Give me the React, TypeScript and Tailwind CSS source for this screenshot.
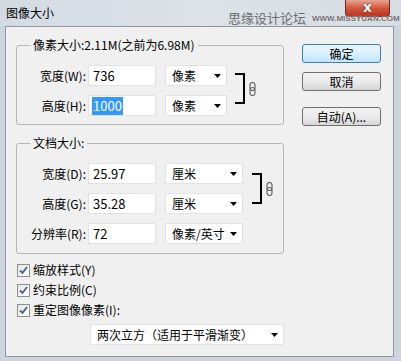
import React from 'react';

const Arrow: React.FC = () => (
  <svg width="7" height="4" viewBox="0 0 7 4" className="shrink-0">
    <path d="M0 0 H7 L3.5 4 Z" fill="#000" />
  </svg>
);

const Select: React.FC<{ value: string; width: string }> = ({ value, width }) => (
  <div className={`${width} h-[21px] bg-white border border-[#e2e2e2] flex items-center justify-between pl-[6px] pr-[5px]`}>
    <span className="leading-none whitespace-nowrap">{value}</span>
    <Arrow />
  </div>
);

const Field: React.FC<{ label: string; value: string; selected?: boolean }> = ({ label, value, selected }) => (
  <div className="flex items-center h-[21px]">
    <div className="w-[71px] pr-[2px] text-right whitespace-nowrap">{label}</div>
    <div className="w-[68px] h-[21px] bg-white border border-[#e2e2e2] flex items-center pl-[3px] text-[13px]">
      {selected ? (
        <span className="bg-[#3399ff] text-white px-[1px] leading-[18px]">{value}</span>
      ) : (
        <span className="pl-[1px]">{value}</span>
      )}
    </div>
  </div>
);

const Bracket: React.FC = () => (
  <div className="w-[10px] h-[31px] border-2 border-l-0 border-black" />
);

const LinkIcon: React.FC = () => (
  <svg width="7" height="14" viewBox="0 0 7 14" className="shrink-0">
    <rect x="1" y="0.5" width="5" height="8" rx="2.5" fill="none" stroke="#666" strokeWidth="1.2" />
    <rect x="1" y="5.5" width="5" height="8" rx="2.5" fill="none" stroke="#666" strokeWidth="1.2" />
  </svg>
);

const Checkbox: React.FC<{ label: string }> = ({ label }) => (
  <div className="flex items-center h-[20px] ml-[1px]">
    <div className="w-[13px] h-[13px] border border-[#8e8f8f] bg-gradient-to-br from-[#e6e6e6] to-white flex items-center justify-center">
      <svg width="9" height="9" viewBox="0 0 9 9">
        <path d="M1 4.5 L3.5 7 L8 1" fill="none" stroke="#4a5f97" strokeWidth="1.8" />
      </svg>
    </div>
    <span className="ml-[3px]">{label}</span>
  </div>
);

const Button: React.FC<{ label: string; primary?: boolean; className?: string }> = ({ label, primary, className }) => (
  <div
    className={`w-[79px] h-[19px] rounded-[3px] border flex items-center justify-center leading-none ${
      primary
        ? 'border-[#3c7fb1] bg-gradient-to-b from-[#eaf6fd] via-[#d9f0fc] to-[#bee6fd]'
        : 'border-[#707070] bg-gradient-to-b from-[#f2f2f2] via-[#ebebeb] to-[#d6d6d6]'
    } ${className || ''}`}
  >
    {label}
  </div>
);

const App: React.FC = () => {
  return (
    <div className="w-[401px] h-[361px] bg-[#cdd4dc] flex flex-col font-['Noto_Sans_CJK_SC',sans-serif] text-[12px] text-black overflow-hidden">
      {/* title bar */}
      <div className="relative h-[26px] shrink-0 bg-gradient-to-r from-[#d3dae2] via-[#dde2e8] to-[#d6dce3] flex items-center pl-[6px]">
        <span className="leading-none">图像大小</span>
        <div className="absolute top-0 right-[11px] w-[45px] h-[17px] rounded-b-[4px] border border-[#6b2a25] border-t-0 bg-gradient-to-b from-[#e8a493] via-[#d2573f] to-[#b8341e] flex items-start justify-center pt-[1px]">
          <span className="text-white font-bold text-[14px] leading-[12px] font-['DejaVu_Sans',sans-serif] [text-shadow:0_0_2px_#3a1010]">x</span>
        </div>
        <div className="absolute left-[228px] top-[11px] flex items-center whitespace-nowrap">
          <span className="text-[#6e6e6e] text-[13px] leading-none">思缘设计论坛</span>
          <span className="ml-[6px] text-[#6e6e6e] text-[8px] font-bold leading-none font-['Liberation_Sans',sans-serif] mt-[2px] [text-shadow:0_0_1px_#ffffff]">WWW.MISSYUAN.COM</span>
        </div>
      </div>

      {/* content */}
      <div className="ml-[5px] mr-[7px] h-[331px] shrink-0 border border-[#8f99a4] bg-[#f0f0f0] flex">
        <div className="ml-[10px] w-[268px] flex flex-col">
          <fieldset className="mt-[10px] border border-[#b5b5b5] rounded-[3px] pt-[12px] pb-[8px]">
            <legend className="ml-[13px] px-[3px] leading-[16px]">像素大小:2.11M(之前为6.98M)</legend>
            <div className="flex items-center">
              <div className="flex flex-col gap-[9px]">
                <div className="flex items-center">
                  <Field label="宽度(W):" value="736" />
                  <div className="ml-[9px]"><Select value="像素" width="w-[62px]" /></div>
                </div>
                <div className="flex items-center">
                  <Field label="高度(H):" value="1000" selected />
                  <div className="ml-[9px]"><Select value="像素" width="w-[62px]" /></div>
                </div>
              </div>
              <div className="ml-[8px] -mt-[4px]"><Bracket /></div>
              <div className="ml-[4px] -mt-[4px]"><LinkIcon /></div>
            </div>
          </fieldset>

          <fieldset className="mt-[10px] border border-[#b5b5b5] rounded-[3px] pt-[12px] pb-[9px]">
            <legend className="ml-[13px] px-[3px] leading-[16px]">文档大小:</legend>
            <div className="flex flex-col gap-[9px]">
              <div className="flex items-center">
                <div className="flex flex-col gap-[9px]">
                  <div className="flex items-center">
                    <Field label="宽度(D):" value="25.97" />
                    <div className="ml-[9px]"><Select value="厘米" width="w-[78px]" /></div>
                  </div>
                  <div className="flex items-center">
                    <Field label="高度(G):" value="35.28" />
                    <div className="ml-[9px]"><Select value="厘米" width="w-[78px]" /></div>
                  </div>
                </div>
                <div className="ml-[9px]"><Bracket /></div>
                <div className="ml-[4px]"><LinkIcon /></div>
              </div>
              <div className="flex items-center">
                <Field label="分辨率(R):" value="72" />
                <div className="ml-[9px]"><Select value="像素/英寸" width="w-[78px]" /></div>
              </div>
            </div>
          </fieldset>

          <div className="mt-[6px] flex flex-col">
            <Checkbox label="缩放样式(Y)" />
            <Checkbox label="约束比例(C)" />
            <Checkbox label="重定图像像素(I):" />
          </div>

          <div className="mt-[4px] ml-[74px]">
            <Select value="两次立方（适用于平滑渐变）" width="w-[194px]" />
          </div>
        </div>

        <div className="ml-[18px] flex flex-col pt-[17px]">
          <Button label="确定" primary />
          <Button label="取消" className="mt-[9px]" />
          <Button label="自动(A)..." className="mt-[16px]" />
        </div>
      </div>
    </div>
  );
};

export default App;
